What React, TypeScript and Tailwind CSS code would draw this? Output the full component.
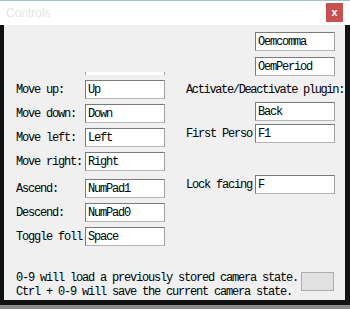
const mono = "font-['Liberation_Mono','DejaVu_Sans_Mono',monospace] text-[12px] tracking-[-1.2px] leading-[14px] text-black";

const KeyBox = ({ value }: { value: string }) => (
  <div className="w-[80px] h-[19px] shrink-0 bg-white border border-[#7a7a7a] border-r-[#a0a0a0] border-b-[#b4b4b4] pl-[2px] flex items-center">
    <span className={mono}>{value}</span>
  </div>
);

const Row = ({ label, value, className = "" }: { label: string; value: string; className?: string }) => (
  <div className={`flex items-center h-[19px] ${className}`}>
    <span className={`${mono} w-[69px] shrink-0 overflow-hidden whitespace-nowrap`}>{label}</span>
    <KeyBox value={value} />
  </div>
);

export default function App() {
  return (
    <div className="w-[350px] h-[309px] bg-[#161616] overflow-hidden flex flex-col">
      {/* Title bar */}
      <div className="h-[25px] shrink-0 bg-white border-t border-[#9cc3d3] flex items-start">
        <span className="ml-[6px] mt-[3px] font-['Liberation_Sans',sans-serif] text-[12px] text-[#e6e6e6]">
          Controls
        </span>
        <div className="ml-auto mr-[7px] mt-[2px] w-[17px] h-[19px] bg-[#c75050] flex items-center justify-center">
          <span className="text-white text-[11px] font-bold font-['Liberation_Sans',sans-serif] leading-none">x</span>
        </div>
      </div>

      {/* Window body */}
      <div className="flex h-[275px] shrink-0">
        <div className="w-[4px] bg-[#101010]" />
        <div className="w-[341px] bg-[#f0f0f0] flex flex-col overflow-hidden">
          <div className="flex">
            {/* Left column */}
            <div className="w-[170px] shrink-0 pl-[12px] flex flex-col">
              <div className="h-[47px]" />
              <div className="ml-[69px] w-[80px] h-[3px] bg-white border-x border-[#a0a0a0]" />
              <div className="h-[5px]" />
              <div className="flex flex-col gap-[5px]">
                <Row label="Move up:" value="Up" />
                <Row label="Move down:" value="Down" />
                <Row label="Move left:" value="Left" />
                <Row label="Move right:" value="Right" />
                <Row label="Ascend:" value="NumPad1" className="mt-[3px]" />
                <Row label="Descend:" value="NumPad0" />
                <Row label="Toggle foll" value="Space" />
              </div>
            </div>

            {/* Right column */}
            <div className="flex flex-col pl-[12px] min-w-0">
              <div className="h-[7px]" />
              <div className="ml-[69px]">
                <KeyBox value="Oemcomma" />
              </div>
              <div className="ml-[69px] mt-[6px]">
                <KeyBox value="OemPeriod" />
              </div>
              <div className="h-[19px] mt-[4px] flex items-center">
                <span className="font-['Liberation_Mono','DejaVu_Sans_Mono',monospace] text-[12px] tracking-[-1.35px] leading-[14px] text-black whitespace-nowrap">
                  Activate/Deactivate plugin:
                </span>
              </div>
              <div className="ml-[69px] mt-[3px]">
                <KeyBox value="Back" />
              </div>
              <div className="mt-[3px]">
                <Row label="First Perso" value="F1" />
              </div>
              <div className="mt-[32px]">
                <Row label="Lock facing" value="F" />
              </div>
            </div>
          </div>

          {/* Footer */}
          <div className="mt-auto mb-[1px] pl-[12px] pr-[11px] flex items-start">
            <div className="flex flex-col">
              <span className={`${mono} leading-[13px] whitespace-nowrap`}>0-9 will load a previously stored camera state.</span>
              <span className={`${mono} leading-[13px] whitespace-nowrap`}>Ctrl + 0-9 will save the current camera state.</span>
            </div>
            <div className="ml-auto mt-[1px] w-[33px] h-[19px] bg-[#e1e1e1] border border-[#adadad]" />
          </div>
        </div>
        <div className="w-[5px] bg-[#141414]" />
      </div>

      <div className="h-[5px] bg-[#111111]" />
      <div className="flex-1 bg-[#8a8a8a]" />
    </div>
  );
}
